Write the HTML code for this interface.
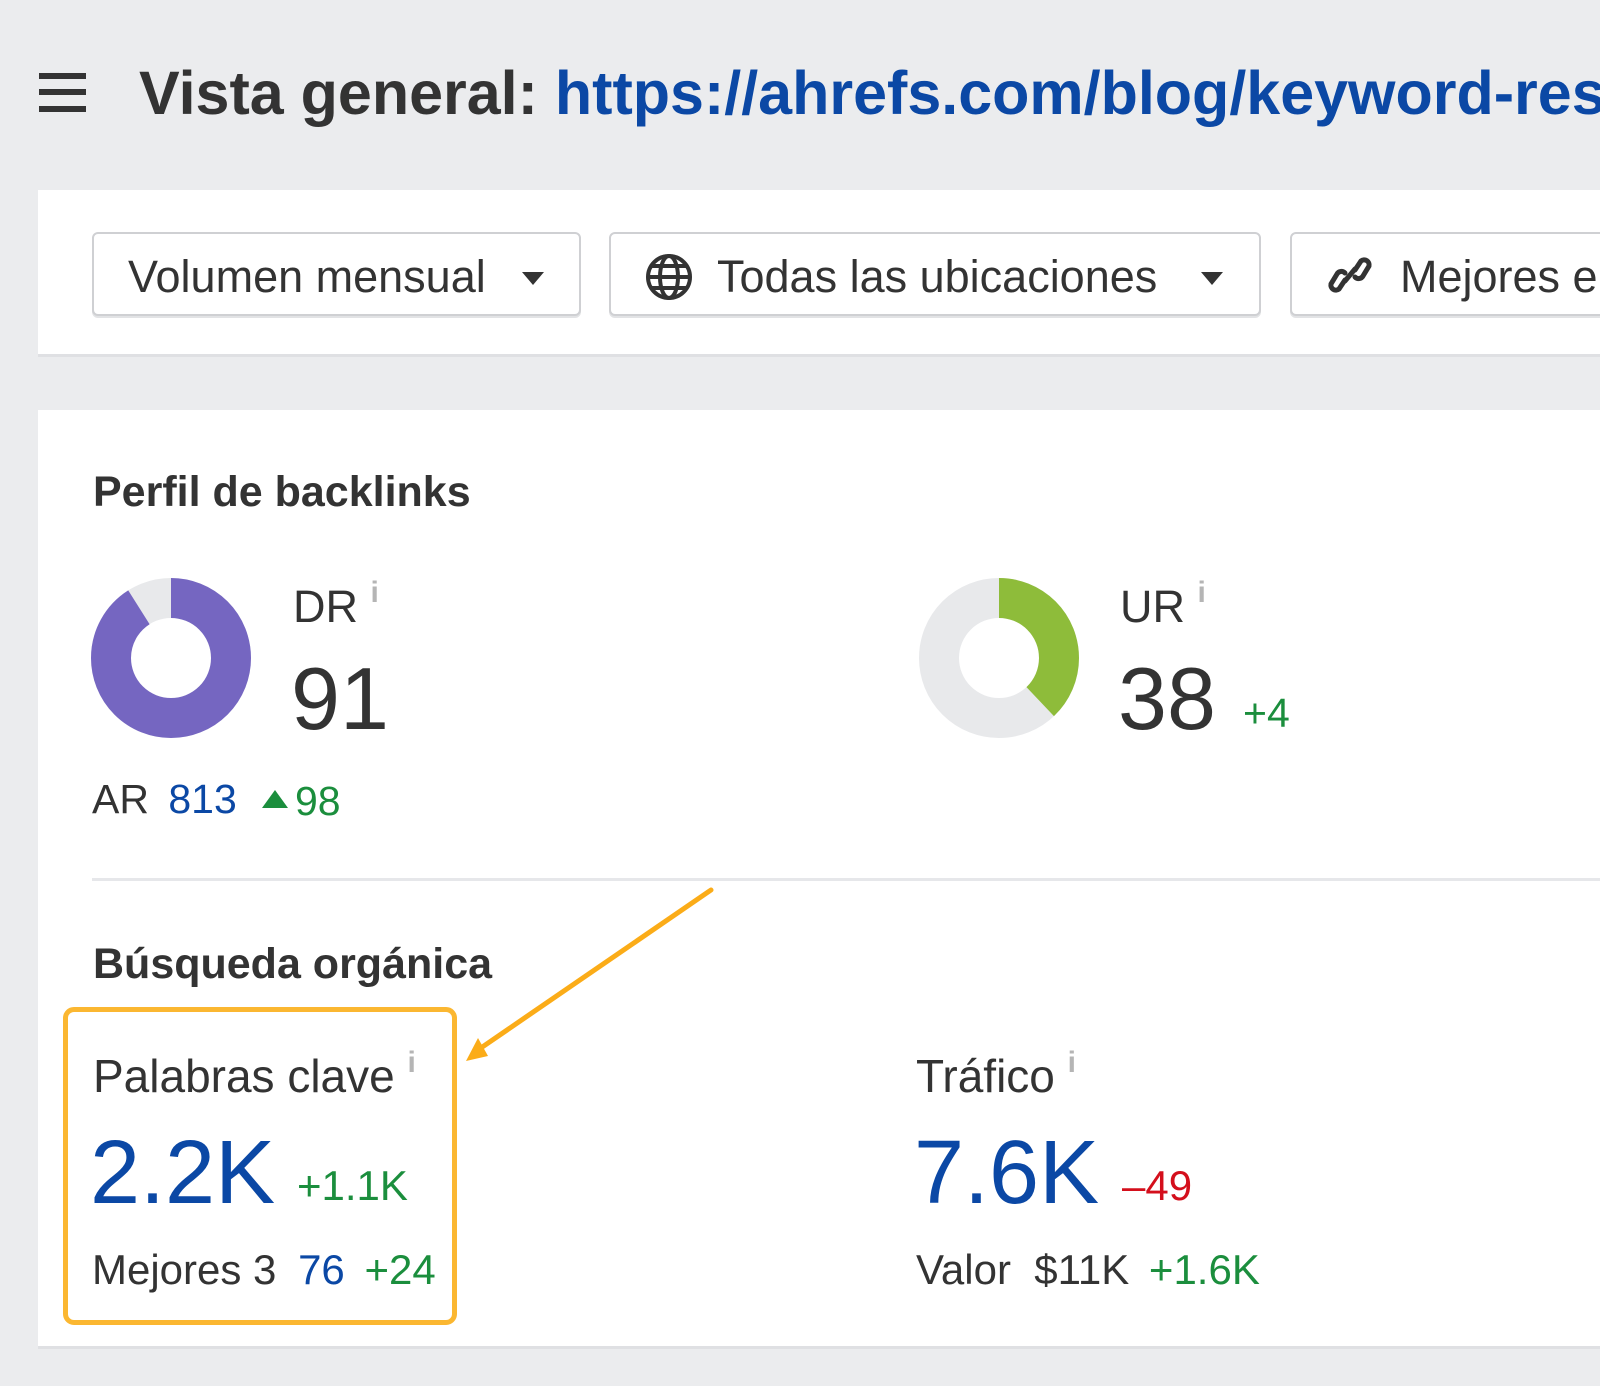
<!DOCTYPE html>
<html><head><meta charset="utf-8"><style>
*{margin:0;padding:0;box-sizing:border-box}
html,body{width:1600px;height:1386px;overflow:hidden}
body{background:#ebecee;font-family:"Liberation Sans",Arial,sans-serif;color:#333}
#w{position:relative;width:1600px;height:1386px;overflow:hidden}
.a{position:absolute;white-space:nowrap}
.blue{color:#0b48a5}.green{color:#1b8e3d}.red{color:#d40f1c}
.btn{position:absolute;top:232px;height:84px;background:#fff;border:2px solid #cfd0d3;border-radius:6px;box-shadow:0 2px 0 #e2e3e5;white-space:nowrap}
.btn span{position:absolute;top:17px;font-size:45px;color:#333;white-space:nowrap}
.caret{position:absolute;top:38px;width:0;height:0;border-left:11px solid transparent;border-right:11px solid transparent;border-top:13px solid #333}
.sup{color:#b5b5b5;font-size:30px;font-weight:bold}
</style></head><body><div id="w">
<div class="a" style="left:39px;top:73px;width:47px;height:39px">
<div style="height:6px;background:#333;margin-bottom:10px"></div><div style="height:6px;background:#333;margin-bottom:11px"></div><div style="height:6px;background:#333"></div></div>
<div class="a" style="left:139px;top:58px;font-size:61px;font-weight:bold;color:#333">Vista general: <span class="blue">https://ahrefs.com/blog/keyword-research/</span></div>

<div class="a" style="left:38px;top:190px;width:1600px;height:167px;background:#fff;border-bottom:3px solid #dfe0e3"></div>
<div class="btn" style="left:92px;width:489px"><span style="left:34px">Volumen mensual</span><div class="caret" style="left:428px"></div></div>
<div class="btn" style="left:609px;width:652px">
<svg style="position:absolute;left:34px;top:19px" width="48" height="48" viewBox="0 0 48 48" fill="none" stroke="#333" stroke-width="4"><circle cx="24" cy="24" r="21"/><ellipse cx="24" cy="24" rx="9" ry="21"/><line x1="3" y1="24" x2="45" y2="24"/><path d="M7 13h34M7 35h34"/></svg>
<span style="left:106px">Todas las ubicaciones</span><div class="caret" style="left:590px"></div></div>
<div class="btn" style="left:1290px;width:400px">
<svg style="position:absolute;left:34px;top:16px" width="48" height="50" viewBox="0 0 48 50" fill="none" stroke="#333" stroke-width="5" stroke-linecap="round"><path d="M19 30l-6 9a5 5 0 0 1-8-5l6-10a5 5 0 0 1 8-1"/><path d="M29 20l6-9a5 5 0 0 1 8 5l-6 10a5 5 0 0 1-8 1"/><path d="M19 31l10-12"/></svg>
<span style="left:108px">Mejores enlaces</span></div>

<div class="a" style="left:38px;top:410px;width:1600px;height:939px;background:#fff;border-bottom:3px solid #dfe0e3"></div>
<div class="a" style="left:93px;top:468px;font-size:43px;font-weight:bold;color:#333">Perfil de backlinks</div>

<svg class="a" style="left:91px;top:578px" width="160" height="160" viewBox="0 0 160 160">
<circle cx="80" cy="80" r="60" fill="none" stroke="#e8e9eb" stroke-width="40"/>
<circle cx="80" cy="80" r="60" fill="none" stroke="#7566c1" stroke-width="40" stroke-dasharray="343 377" transform="rotate(-90 80 80)"/></svg>
<div class="a" style="left:293px;top:576px;font-size:45px">DR <span class="sup" style="vertical-align:20px">i</span></div>
<div class="a" style="left:291px;top:648px;font-size:88px;color:#333">91</div>

<svg class="a" style="left:919px;top:578px" width="160" height="160" viewBox="0 0 160 160">
<circle cx="80" cy="80" r="60" fill="none" stroke="#e8e9eb" stroke-width="40"/>
<circle cx="80" cy="80" r="60" fill="none" stroke="#8ebc3a" stroke-width="40" stroke-dasharray="143 377" transform="rotate(-90 80 80)"/></svg>
<div class="a" style="left:1120px;top:576px;font-size:45px">UR <span class="sup" style="vertical-align:20px">i</span></div>
<div class="a" style="left:1118px;top:648px;font-size:88px;color:#333">38</div>
<div class="a green" style="left:1243px;top:690px;font-size:41px">+4</div>

<div class="a" style="left:92px;top:776px;font-size:41px">AR <span class="blue" style="margin-left:8px">813</span></div>
<div class="a" style="left:262px;top:790px;width:0;height:0;border-left:13px solid transparent;border-right:13px solid transparent;border-bottom:18px solid #1b8e3d"></div>
<div class="a green" style="left:295px;top:778px;font-size:41px">98</div>

<div class="a" style="left:92px;top:878px;width:1600px;height:3px;background:#e6e7ea"></div>
<svg class="a" style="left:0;top:0" width="1600" height="1386"><line x1="711" y1="890" x2="475" y2="1052" stroke="#fbac18" stroke-width="5" stroke-linecap="round"/><path d="M466 1061 L478 1038 L488 1056 Z" fill="#fbac18"/></svg>

<div class="a" style="left:93px;top:940px;font-size:43px;font-weight:bold">Búsqueda orgánica</div>
<div class="a" style="left:63px;top:1007px;width:394px;height:318px;border:5px solid #fbb731;border-radius:11px"></div>
<div class="a" style="left:93px;top:1046px;font-size:46px">Palabras clave <span class="sup" style="vertical-align:20px">i</span></div>
<div class="a blue" style="left:90px;top:1122px;font-size:90px">2.2K</div>
<div class="a green" style="left:297px;top:1162px;font-size:42px">+1.1K</div>
<div class="a" style="left:92px;top:1246px;font-size:42px">Mejores 3 <span class="blue" style="margin-left:10px">76</span> <span class="green" style="margin-left:8px">+24</span></div>

<div class="a" style="left:916px;top:1046px;font-size:46px">Tráfico <span class="sup" style="vertical-align:20px">i</span></div>
<div class="a blue" style="left:914px;top:1122px;font-size:90px">7.6K</div>
<div class="a red" style="left:1122px;top:1162px;font-size:42px">–49</div>
<div class="a" style="left:916px;top:1246px;font-size:42px">Valor &nbsp;$11K <span class="green" style="margin-left:8px">+1.6K</span></div>
</div></body></html>
